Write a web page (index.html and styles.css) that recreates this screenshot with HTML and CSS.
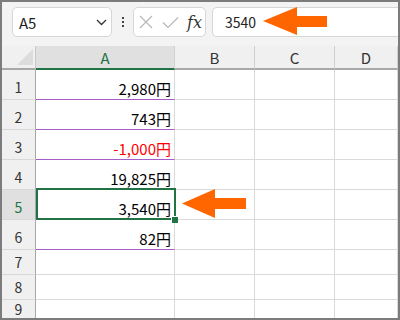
FILE: index.html
```html
<!DOCTYPE html>
<html lang="ja">
<head>
  <meta charset="UTF-8">
  <title>Sheet</title>
  <link rel="stylesheet" href="styles.css">
</head>
<body>
  <div class="frame">
    <div class="toolbar">
      <div class="namebox">
        <span>A5</span>
        <svg width="11" height="7" viewBox="0 0 11 7"><path d="M1 1 L5.5 5.5 L10 1" fill="none" stroke="#333" stroke-width="1.3"/></svg>
      </div>
      <div class="dots"><i></i><i></i><i></i></div>
      <div class="fxbox">
        <svg width="14" height="14" viewBox="0 0 14 14"><path d="M1 1 L13 13 M13 1 L1 13" stroke="#b8b8b8" stroke-width="1.2"/></svg>
        <svg width="17" height="13" viewBox="0 0 17 13"><path d="M1 6.5 L6 11.5 L16 1.5" fill="none" stroke="#b8b8b8" stroke-width="1.2"/></svg>
        <span class="fx">fx</span>
      </div>
      <div class="formula">3540</div>
    </div>

    <div class="sheet">
      <div class="corner"></div>
      <div class="colhead sel">A</div>
      <div class="colhead">B</div>
      <div class="colhead">C</div>
      <div class="colhead">D</div>

      <div class="rowhead">1</div>
      <div class="cell val purple">2,980円</div>
      <div class="cell"></div><div class="cell"></div><div class="cell"></div>

      <div class="rowhead">2</div>
      <div class="cell val purple">743円</div>
      <div class="cell"></div><div class="cell"></div><div class="cell"></div>

      <div class="rowhead">3</div>
      <div class="cell val purple neg">-1,000円</div>
      <div class="cell"></div><div class="cell"></div><div class="cell"></div>

      <div class="rowhead">4</div>
      <div class="cell val">19,825円</div>
      <div class="cell"></div><div class="cell"></div><div class="cell"></div>

      <div class="rowhead sel">5</div>
      <div class="cell val active">3,540円</div>
      <div class="cell"></div><div class="cell"></div><div class="cell"></div>

      <div class="rowhead">6</div>
      <div class="cell val purple">82円</div>
      <div class="cell"></div><div class="cell"></div><div class="cell"></div>

      <div class="rowhead short">7</div>
      <div class="cell"></div><div class="cell"></div><div class="cell"></div><div class="cell"></div>

      <div class="rowhead short">8</div>
      <div class="cell"></div><div class="cell"></div><div class="cell"></div><div class="cell"></div>

      <div class="rowhead short last">9</div>
      <div class="cell last"></div><div class="cell last"></div><div class="cell last"></div><div class="cell last"></div>
    </div>

    <!-- callout arrows -->
    <svg class="arrow arrow-bar" width="66" height="30" viewBox="0 0 66 30"><path d="M0 14 L34 0 L34 9 L64 9 L64 20 L34 20 L34 28 Z" fill="#ff6600"/></svg>
    <svg class="arrow arrow-cell" width="66" height="30" viewBox="0 0 66 30"><path d="M0 14.5 L33 0 L33 9 L64 9 L64 20 L33 20 L33 29 Z" fill="#ff6600"/></svg>
  </div>
</body>
</html>
```

FILE: styles.css
```css
* {
  box-sizing: border-box;
}
body {
  margin: 0;
  font-family: "Noto Sans CJK JP", "Noto Sans", sans-serif;
}
.frame {
  position: relative;
  width: 400px;
  height: 320px;
  border: 2px solid #7c7c7c;
  overflow: hidden;
  background: #fff;
}
.toolbar {
  height: 44px;
  background: #f3f3f3;
  display: flex;
  align-items: flex-start;
  padding: 5px 0 0 10px;
}
.namebox {
  width: 100px;
  height: 30px;
  background: #fff;
  border: 1px solid #d6d6d6;
  border-radius: 5px;
  display: flex;
  align-items: center;
  justify-content: space-between;
  padding: 0 4px 0 6px;
  font-size: 15px;
  color: #222;
}
.dots {
  width: 21px;
  height: 30px;
  display: flex;
  flex-direction: column;
  align-items: center;
  justify-content: center;
  gap: 2px;
}
.dots i {
  width: 2px;
  height: 2px;
  background: #444;
}
.fxbox {
  width: 73px;
  height: 30px;
  background: #fff;
  border: 1px solid #d6d6d6;
  border-radius: 5px;
  display: flex;
  align-items: center;
  gap: 9px;
  padding-left: 5px;
}
.fx {
  font-family: "DejaVu Serif", "Liberation Serif", serif;
  font-style: italic;
  font-size: 16px;
  color: #333;
  margin-left: -1px;
}
.formula {
  flex: 1;
  height: 30px;
  margin-left: 6px;
  background: #fff;
  border: 1px solid #d6d6d6;
  border-right: none;
  border-radius: 5px 0 0 5px;
  padding-left: 12px;
  font-size: 14px;
  line-height: 28px;
  color: #222;
}
.sheet {
  display: grid;
  grid-template-columns: 34px 139px 80px 80px 1fr;
  grid-template-rows: 24px repeat(6, 30px) 25px 25px 18px;
}
.corner {
  background: #f0f0f0;
  border-right: 1px solid #c8c8c8;
  border-bottom: 2px solid #a8a8a8;
  position: relative;
}
.corner::after {
  content: "";
  position: absolute;
  right: 2px;
  bottom: 3px;
  border-style: solid;
  border-width: 0 0 16px 16px;
  border-color: transparent transparent #dcdcdc transparent;
}
.colhead {
  background: #f0f0f0;
  border-right: 1px solid #d0d0d0;
  border-bottom: 2px solid #a8a8a8;
  display: flex;
  align-items: center;
  justify-content: center;
  font-size: 15px;
  color: #333;
}
.colhead.sel {
  background: #e0e0e0;
  color: #217346;
  border-bottom-color: #217346;
}
.rowhead {
  background: #f0f0f0;
  border-right: 1px solid #a8a8a8;
  border-bottom: 1px solid #d8d8d8;
  display: flex;
  align-items: flex-end;
  justify-content: center;
  padding-bottom: 5px;
  font-size: 14px;
  line-height: 14px;
  color: #333;
}
.rowhead.short {
  align-items: center;
  padding-bottom: 1px;
}
.rowhead.last {
  align-items: flex-start;
  padding: 2px 0 0;
  border-bottom: none;
}
.rowhead.sel {
  background: #e0e0e0;
  color: #217346;
}
.cell {
  border-right: 1px solid #dadada;
  border-bottom: 1px solid #dadada;
}
.cell.last {
  border-bottom: none;
}
.cell.val {
  display: flex;
  align-items: flex-end;
  justify-content: flex-end;
  padding: 0 3px 3px 0;
  font-size: 15px;
  line-height: 15px;
  color: #000;
}
.cell.purple {
  border-bottom-color: #a45cc7;
}
.cell.neg {
  color: #ff0000;
}
.cell.active {
  position: relative;
}
.cell.active::after {
  content: "";
  position: absolute;
  top: -2px;
  left: 0;
  right: -2px;
  bottom: -1px;
  border: 2px solid #217346;
}
.cell.active::before {
  content: "";
  position: absolute;
  right: -4px;
  bottom: -4px;
  width: 6px;
  height: 6px;
  background: #217346;
  border-left: 1px solid #fff;
  border-top: 1px solid #fff;
  z-index: 1;
}
.arrow {
  position: absolute;
}
.arrow-bar {
  left: 261px;
  top: 5px;
}
.arrow-cell {
  left: 180px;
  top: 187px;
}
```
